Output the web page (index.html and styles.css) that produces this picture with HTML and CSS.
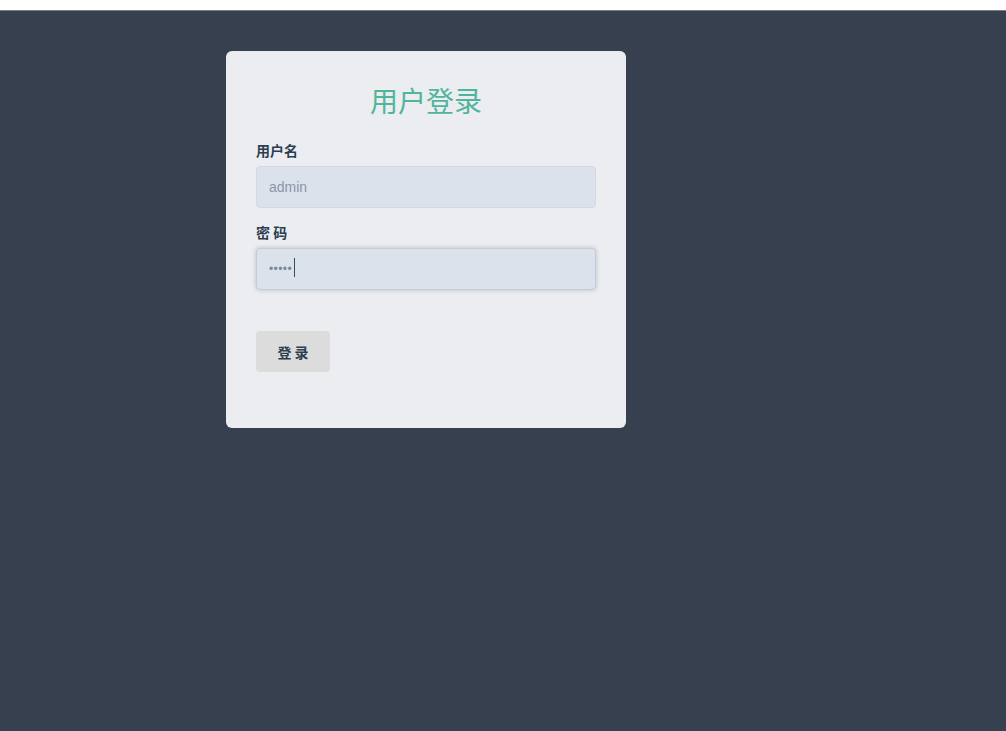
FILE: index.html
```html
<html lang="zh-CN">
<head>
  <meta charset="UTF-8" />
  <meta name="viewport" content="width=device-width, initial-scale=1.0">
  <title>用户登录</title>
  <link rel="stylesheet" href="styles.css">
</head>
<body>
  <div class="top-strip"></div>
  <div class="page">
    <form class="login-box" onsubmit="return false;">
      <h2 class="title">用户登录</h2>

      <label class="field-label" for="username">用户名</label>
      <input class="field-input" id="username" type="text" placeholder="admin">

      <label class="field-label" for="password">密 码</label>
      <div class="pwd-wrap">
        <input class="field-input focused" id="password" type="password" value="admin">
        <span class="caret"></span>
      </div>

      <button class="login-btn" type="submit">登 录</button>
    </form>
  </div>
</body>
</html>
```

FILE: styles.css
```css
html, body {
  margin: 0;
  padding: 0;
  height: 100%;
  background: #fff;
}
body {
  font-family: "Liberation Sans", "Noto Sans CJK SC", Arial, sans-serif;
  overflow: hidden;
}
.top-strip {
  height: 10px;
  background: #fff;
  border-bottom: 1px solid #7d7f82;
}
.page {
  background: #36404e;
  height: 720px;
  padding: 40px 0 0 226px;
  box-sizing: border-box;
}
.login-box {
  width: 400px;
  box-sizing: border-box;
  background: #ecedf0;
  border-radius: 6px;
  padding: 32px 30px 56px;
  margin: 0;
}
.title {
  margin: 0 0 24px;
  font-family: "Noto Sans CJK SC", sans-serif;
  font-size: 28px;
  line-height: 34px;
  font-weight: normal;
  color: #50b59c;
  text-align: center;
}
.field-label {
  display: block;
  font-family: "Noto Sans CJK SC", sans-serif;
  font-size: 14px;
  line-height: 18px;
  font-weight: bold;
  color: #2c3e50;
  margin-bottom: 7px;
}
.field-input {
  display: block;
  width: 340px;
  height: 42px;
  box-sizing: border-box;
  margin: 0 0 15px;
  padding: 0 12px;
  border: 1px solid #d3d9e2;
  border-radius: 4px;
  background: #dce2eb;
  font-family: "Liberation Sans", Arial, sans-serif;
  font-size: 14px;
  color: #7d8a9c;
  outline: none;
}
.field-input::placeholder {
  color: #8a96a8;
}
.pwd-wrap {
  position: relative;
  margin-bottom: 41px;
}
.field-input.focused {
  border-color: #c4ccd7;
  box-shadow: 0 0 4px rgba(60, 75, 95, 0.3);
  font-size: 12px;
  letter-spacing: 0.4px;
  color: #7a889b;
  margin: 0;
}
.caret {
  position: absolute;
  left: 38px;
  top: 10px;
  width: 1px;
  height: 19px;
  background: #3b4a5e;
}
.login-btn {
  display: block;
  width: 74px;
  height: 41px;
  border: none;
  border-radius: 4px;
  background: #dcdcdc;
  font-family: "Noto Sans CJK SC", sans-serif;
  font-size: 14px;
  font-weight: bold;
  color: #2c3e50;
  cursor: pointer;
  padding: 0;
}
```
